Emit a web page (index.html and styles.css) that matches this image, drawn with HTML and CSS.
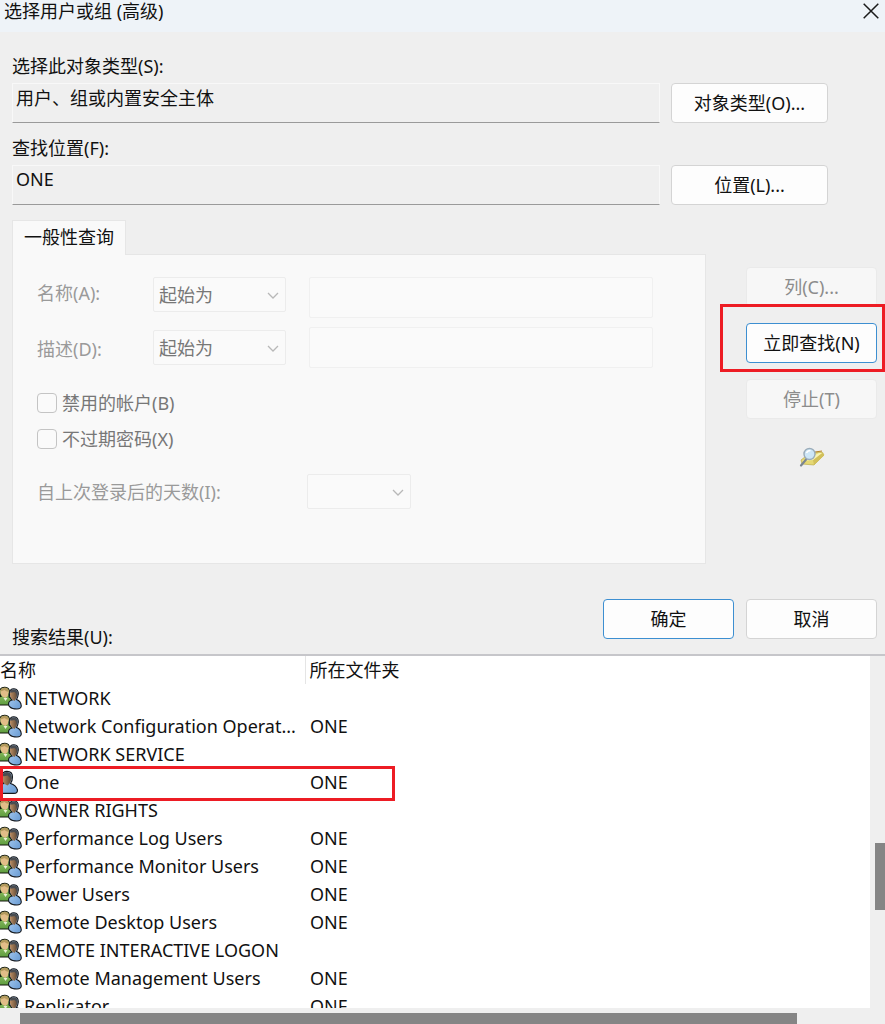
FILE: index.html
```
<!DOCTYPE html>
<html lang="zh-CN">
<head>
  <meta charset="UTF-8">
  <meta name="viewport" content="width=device-width, initial-scale=1.0">
  <title>选择用户或组 (高级)</title>
  <link rel="stylesheet" href="styles.css">
</head>
<body>
  <!-- shared icons -->
  <svg class="icon-defs" width="0" height="0">
    <defs>
      <linearGradient id="blue-shirt" x1="0" y1="0" x2="1" y2="1">
        <stop offset="0" stop-color="#b4d4f5"/>
        <stop offset="1" stop-color="#6699d2"/>
      </linearGradient>
      <linearGradient id="green-shirt" x1="0" y1="0" x2="0" y2="1">
        <stop offset="0" stop-color="#a9d078"/>
        <stop offset="1" stop-color="#5d9c3e"/>
      </linearGradient>
      <linearGradient id="dark-face" x1="0" y1="0" x2="1" y2="0">
        <stop offset="0" stop-color="#bd8f63"/>
        <stop offset="1" stop-color="#5c4736"/>
      </linearGradient>
      <symbol id="icon-group" viewBox="0 0 22 24">
        <path d="M-2 19V12Q-1 10.500 1 10.500Q-1 7 0 4Q1 1 5 1.200Q9.500 1.500 9.500 6L9 11L13 13V19Z" fill="url(#green-shirt)" stroke="#15180f" stroke-width="1.100"/>
        <path d="M.5 4Q2 2.500 5 2.800Q8.500 3 8.600 6.500Q8.500 10 5.500 12Q2 11 .6 8Z" fill="#e2bd88"/>
        <path d="M.3 5Q1 1.700 5 1.800Q9 2 9 6Q6 5.500 4.500 4Q2 5.500 .3 5Z" fill="#b39a5e"/>
        <path d="M3.500 12L5.500 15L7.500 12Z" fill="#e8f1d5"/>
        <path d="M8.500 18Q8.500 15 12 14Q9 11 9.300 7Q10 2.500 14 2.700Q18.500 3 18.300 8Q18 11 16.500 13.500Q21 15 21.300 20Q21 23 17 23Q12 23 10 21Q8.500 20 8.500 18Z" fill="url(#blue-shirt)" stroke="#15181d" stroke-width="1.100"/>
        <path d="M10 7Q11 4 14 4Q17.600 4 17.500 8Q17 12.500 14.500 15Q10.500 13 10 9Z" fill="url(#dark-face)"/>
        <path d="M9.900 6.500Q10.500 3.200 14 3.300Q18 3.500 17.700 8.500L16.800 10Q16.500 7 14.500 6Q12 6.500 9.900 6.500Z" fill="#4a4d51"/>
      </symbol>
      <symbol id="icon-user" viewBox="0 0 22 24">
        <path d="M-1 14L4 13.500Q1 10 1.500 6Q3 1.300 7 1.400Q12.500 1.500 12.500 7Q12.500 11 10.500 13.500Q16 15 17.500 20Q17.500 23.400 14 23.400H-1Z" fill="url(#blue-shirt)" stroke="#15181d" stroke-width="1.100"/>
        <path d="M2 6Q4 3 7 3Q11.700 3.500 11.500 8Q11 13 7.500 15.500Q3 14 2 9Z" fill="url(#dark-face)"/>
        <path d="M2 6Q3.500 2 7 2.100Q12 2.300 11.900 8.500L11 10Q10.500 7 7.500 5.500Q5 6.500 2 6Z" fill="#4a4d51"/>
      </symbol>
      <symbol id="icon-chevron" viewBox="0 0 12 12">
        <path d="M1 4L6 9L11 4" fill="none" stroke="currentColor" stroke-width="1.300"/>
      </symbol>
    </defs>
  </svg>

  <div class="dialog">
    <header class="title-bar">
      <h1 class="title">选择用户或组 (高级)</h1>
      <button class="close-button" aria-label="关闭">
        <svg width="16" height="16" viewBox="0 0 16 16"><path d="M.7 .7L15.300 15.300M15.300 .7L.7 15.300" stroke="#1a1a1a" stroke-width="1.500" fill="none"/></svg>
      </button>
    </header>

    <div class="scope">
      <label class="scope-label" for="object-type">选择此对象类型(S):</label>
      <input class="scope-input" id="object-type" type="text" value="用户、组或内置安全主体" readonly>
      <button class="button">对象类型(O)...</button>
      <label class="scope-label" for="location">查找位置(F):</label>
      <input class="scope-input" id="location" type="text" value="ONE" readonly>
      <button class="button">位置(L)...</button>
    </div>

    <div class="query">
      <div class="tabs">
        <button class="tab">一般性查询</button>
        <div class="panel">
          <div class="filters">
            <div class="filter-labels">
              <label for="name-text">名称(A):</label>
              <label for="desc-text">描述(D):</label>
            </div>
            <div class="filter-modes">
              <span class="select">
                <select aria-label="名称" disabled><option>起始为</option></select>
                <svg class="chevron"><use href="#icon-chevron"/></svg>
              </span>
              <span class="select">
                <select aria-label="描述" disabled><option>起始为</option></select>
                <svg class="chevron"><use href="#icon-chevron"/></svg>
              </span>
            </div>
            <div class="filter-inputs">
              <input class="filter-input" id="name-text" type="text" disabled>
              <input class="filter-input" id="desc-text" type="text" disabled>
            </div>
          </div>
          <div class="checks">
            <label class="check"><input type="checkbox" disabled>禁用的帐户(B)</label>
            <label class="check"><input type="checkbox" disabled>不过期密码(X)</label>
          </div>
          <div class="days">
            <label class="days-label" for="days">自上次登录后的天数(I):</label>
            <span class="select select-days">
              <select id="days" disabled><option></option></select>
              <svg class="chevron"><use href="#icon-chevron"/></svg>
            </span>
          </div>
        </div>
      </div>

      <div class="actions">
        <button class="button" disabled>列(C)...</button>
        <div class="find-now">
          <button class="button button-primary">立即查找(N)</button>
          <span class="mark mark-find"></span>
        </div>
        <button class="button" disabled>停止(T)</button>
        <svg class="search-icon" width="26" height="22" viewBox="0 0 26 22">
          <path d="M2 13L11 6L23 5L25 8L15 18L3 17Z" fill="#e5d873" stroke="#b3a23c" stroke-width=".6"/>
          <path d="M14 13L24 5.500L25 8.500L15 18Z" fill="#d2c05a"/>
          <path d="M10 11L20 6L23 6L14 13L3 14Z" fill="#f8f2b4"/>
          <path d="M16 5L23 4" stroke="#b8862b" stroke-width="1.200"/>
          <path d="M7.500 12L2 18.500" stroke="#7b8590" stroke-width="2.200" stroke-linecap="round"/>
          <circle cx="10.500" cy="7" r="5.500" fill="#cde6f7" stroke="#9aacba" stroke-width="1.400"/>
          <path d="M7.500 6Q8.500 3.500 11.500 3.500" stroke="#fff" stroke-width="1.500" fill="none"/>
        </svg>
      </div>
    </div>

    <div class="footer">
      <span class="results-label" id="results-label">搜索结果(U):</span>
      <button class="button button-primary">确定</button>
      <button class="button">取消</button>
    </div>

    <div class="results">
      <div class="results-list">
        <table class="results-table" aria-labelledby="results-label">
          <thead>
            <tr><th class="col-name">名称</th><th>所在文件夹</th></tr>
          </thead>
          <tbody>
            <tr><td><svg class="row-icon"><use href="#icon-group"/></svg>NETWORK</td><td></td></tr>
            <tr><td><svg class="row-icon"><use href="#icon-group"/></svg>Network Configuration Operat...</td><td>ONE</td></tr>
            <tr><td><svg class="row-icon"><use href="#icon-group"/></svg>NETWORK SERVICE</td><td></td></tr>
            <tr class="marked-row"><td><svg class="row-icon"><use href="#icon-user"/></svg>One<span class="mark mark-row"></span></td><td>ONE</td></tr>
            <tr><td><svg class="row-icon"><use href="#icon-group"/></svg>OWNER RIGHTS</td><td></td></tr>
            <tr><td><svg class="row-icon"><use href="#icon-group"/></svg>Performance Log Users</td><td>ONE</td></tr>
            <tr><td><svg class="row-icon"><use href="#icon-group"/></svg>Performance Monitor Users</td><td>ONE</td></tr>
            <tr><td><svg class="row-icon"><use href="#icon-group"/></svg>Power Users</td><td>ONE</td></tr>
            <tr><td><svg class="row-icon"><use href="#icon-group"/></svg>Remote Desktop Users</td><td>ONE</td></tr>
            <tr><td><svg class="row-icon"><use href="#icon-group"/></svg>REMOTE INTERACTIVE LOGON</td><td></td></tr>
            <tr><td><svg class="row-icon"><use href="#icon-group"/></svg>Remote Management Users</td><td>ONE</td></tr>
            <tr><td><svg class="row-icon"><use href="#icon-group"/></svg>Replicator</td><td>ONE</td></tr>
          </tbody>
        </table>
      </div>
      <div class="scroll-y"><div class="thumb-y"></div></div>
      <div class="scroll-x"><div class="thumb-x"></div></div>
    </div>
  </div>
</body>
</html>
```

FILE: styles.css
```
* {
  box-sizing: border-box;
}
body {
  margin: 0;
  background: #efefef;
  color: #111;
  font-family: "Noto Sans", "Noto Sans CJK SC", sans-serif;
  font-size: 18px;
  line-height: 24px;
}
button, input, select {
  margin: 0;
  font: inherit;
  color: inherit;
}
.icon-defs {
  position: absolute;
}
.dialog {
  display: flex;
  flex-direction: column;
  height: 100vh;
  overflow: hidden;
}

/* Title bar */
.title-bar {
  display: flex;
  justify-content: space-between;
  align-items: flex-start;
  height: 32px;
  padding: 0 6px 0 4px;
  background: #eef3f8;
}
.title {
  margin: 0;
  font-size: 18px;
  font-weight: normal;
  line-height: 22px;
}
.close-button {
  display: flex;
  padding: 3px 0;
  border: none;
  background: none;
}

.button {
  height: 40px;
  padding: 0 0 1px;
  border: 1px solid #d4d4d4;
  border-radius: 4px;
  background: #fdfdfd;
  white-space: nowrap;
}
.button:disabled {
  border-color: #eaeaea;
  background: #f7f7f7;
  color: #8c8c8c;
}
.button-primary {
  border-color: #3d8fd1;
}

/* Object type and location */
.scope {
  display: grid;
  grid-template-columns: 1fr 157px;
  column-gap: 11px;
  padding: 22px 57px 0 12px;
}
.scope-label {
  grid-column: 1 / -1;
  margin-bottom: 5px;
}
.scope-input {
  min-width: 0;
  height: 40px;
  margin-bottom: 13px;
  padding: 0 3px 12px;
  border: 1px solid #f8f8f8;
  border-bottom-color: #9a9a9a;
  background: #efefef;
}

/* Query tab */
.query {
  display: flex;
  gap: 40px;
  padding: 2px 8px 0 12px;
}
.tabs {
  flex: 1;
  min-width: 0;
}
.tab {
  display: block;
  position: relative;
  height: 35px;
  margin-bottom: -1px;
  padding: 0 11px 2px;
  border: 1px solid #e6e6e6;
  border-bottom: none;
  background: #f9f9f9;
}
.panel {
  padding: 22px 52px 54px 24px;
  border: 1px solid #e6e6e6;
  background: #f9f9f9;
  color: #9a9a9a;
}
.filters {
  display: flex;
}
.filter-labels, .filter-modes, .filter-inputs {
  display: flex;
  flex-direction: column;
}
.filter-labels {
  width: 116px;
  gap: 32px;
  padding-top: 4px;
}
.filter-modes {
  width: 133px;
  gap: 18px;
  margin-right: 23px;
}
.filter-inputs {
  flex: 1;
  min-width: 0;
  gap: 9px;
}
.filter-input {
  width: 100%;
  height: 41px;
  border: 1px solid #f0f0f0;
  border-radius: 2px;
  background: #fafafa;
}
.select {
  display: block;
  position: relative;
  height: 35px;
}
.select select {
  width: 100%;
  height: 100%;
  padding: 0 5px;
  border: 1px solid #ececec;
  border-radius: 2px;
  background: #fafafa;
  color: #777;
  opacity: 1;
  appearance: none;
}
.chevron {
  position: absolute;
  top: 12px;
  right: 7px;
  width: 12px;
  height: 12px;
  color: #b8b8b8;
}
.checks {
  display: flex;
  flex-direction: column;
  gap: 12px;
  margin: 23px 0;
  color: #777;
}
.check {
  display: flex;
  align-items: center;
  gap: 5px;
}
.check input {
  width: 20px;
  height: 20px;
  border: 1px solid #c4c4c4;
  border-radius: 4px;
  background: #fafafa;
  appearance: none;
}
.days {
  display: flex;
  align-items: center;
}
.days-label {
  width: 270px;
}
.select-days {
  width: 104px;
}

.actions {
  display: flex;
  flex-direction: column;
  gap: 16px;
  width: 131px;
  padding-top: 47px;
}
.find-now {
  display: flex;
  position: relative;
}
.find-now .button {
  flex: 1;
}
.search-icon {
  align-self: center;
  margin-top: 12px;
}

/* Red highlight frames */
.mark {
  position: absolute;
  border: 3px solid #ed1c24;
  pointer-events: none;
}
.mark-find {
  top: -19px;
  right: -8px;
  bottom: -9px;
  left: -26px;
}
.mark-row {
  top: -2px;
  left: 0;
  width: 395px;
  height: 35px;
}

.footer {
  display: flex;
  gap: 12px;
  height: 50px;
  margin: 35px 8px 5px 12px;
}
.footer .button {
  width: 131px;
}
.results-label {
  flex: 1;
  align-self: flex-end;
}

/* Search results */
.results {
  display: grid;
  flex: 1;
  grid-template-columns: 1fr 15px;
  grid-template-rows: 1fr 16px;
  min-height: 0;
  border-top: 2px solid #c6c6ca;
}
.results-list {
  overflow: hidden;
  background: #fff;
}
.results-table {
  width: 100%;
  border-collapse: collapse;
  table-layout: fixed;
}
.results-table th {
  height: 28px;
  padding: 0 4px;
  font-weight: normal;
  text-align: left;
}
.results-table .col-name {
  width: 305px;
  padding: 0;
  border-right: 1px solid #e5e5e5;
}
.results-table td {
  height: 28px;
  padding: 0 0 0 5px;
  white-space: nowrap;
}
.results-table td:first-child {
  padding: 0;
}
.marked-row td:first-child {
  position: relative;
}
.row-icon {
  width: 22px;
  height: 24px;
  margin-right: 2px;
  vertical-align: top;
}
.scroll-y {
  padding: 187px 0 0 5px;
}
.thumb-y {
  height: 67px;
  background: #858585;
}
.scroll-x {
  grid-column: 1 / -1;
  padding: 5px 88px 0 20px;
}
.thumb-x {
  height: 11px;
  background: #858585;
}
```
